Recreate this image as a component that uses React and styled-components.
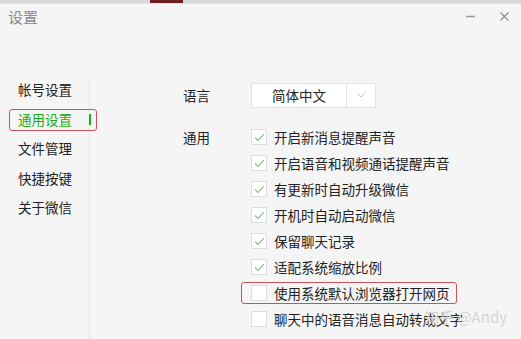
import styled, { createGlobalStyle } from 'styled-components';

const GlobalStyle = createGlobalStyle`
	html, body {
		margin: 0;
		padding: 0;
		background: #f5f5f5;
	}
	body {
		font-family: "Noto Sans CJK SC", "Noto Sans", sans-serif;
	}
`;

const Window = styled.div`
	width: 521px;
	height: 339px;
	background: #f5f5f5;
	overflow: hidden;
	position: relative;
	display: flex;
	flex-direction: column;
`;

const TopStrip = styled.div`
	height: 3px;
	background: #d9d9d9;
	display: flex;
	border-bottom: 1px solid #e4e4e4;
	&::before {
		content: '';
		width: 150px;
	}
	&::after {
		content: '';
		width: 33px;
		background: #6b1f22;
	}
`;

const Header = styled.div`
	height: 71px;
	display: flex;
	justify-content: space-between;
	align-items: flex-start;
	padding: 3px 12px 0 8px;
	box-sizing: border-box;
`;

const Title = styled.div`
	font-size: 15px;
	line-height: 20px;
	color: #8a8a8a;
`;

const Controls = styled.div`
	display: flex;
	align-items: center;
	gap: 25px;
	margin-top: 5px;
`;

const Body = styled.div`
	flex: 1;
	display: flex;
`;

const Sidebar = styled.div`
	width: 89px;
	border-right: 1px solid #e6e6e6;
	display: flex;
	flex-direction: column;
	margin-top: 5px;
	margin-bottom: -5px;
`;

const NavItem = styled.div`
	position: relative;
	height: 29.5px;
	line-height: 29.5px;
	padding-left: 18px;
	font-size: 13.5px;
	color: ${(p) => (p.$active ? '#1aad19' : '#222')};
	&:first-child {
		margin-top: -5px;
	}
`;

const ActiveBar = styled.span`
	position: absolute;
	right: -2px;
	top: 9px;
	width: 2px;
	height: 11px;
	background: #1aad19;
`;

const Annotation = styled.span`
	position: absolute;
	left: ${(p) => p.$left}px;
	top: ${(p) => p.$top}px;
	width: ${(p) => p.$width}px;
	height: ${(p) => p.$height}px;
	border: 1.5px solid #c8535a;
	border-radius: 3px;
	box-sizing: border-box;
	pointer-events: none;
`;

const Content = styled.div`
	flex: 1;
	padding: 8px 0 0 93px;
	display: grid;
	grid-template-columns: 68px 1fr;
	grid-auto-rows: min-content;
	row-gap: 16px;
`;

const Label = styled.div`
	font-size: 13.5px;
	color: #222;
	line-height: ${(p) => p.$lh}px;
`;

const Select = styled.div`
	display: flex;
	width: 125px;
	height: 25px;
	box-sizing: border-box;
	background: #fff;
	border: 1px solid #e3e3e3;
`;

const SelectValue = styled.div`
	flex: 1;
	text-align: center;
	font-size: 13.5px;
	line-height: 23px;
	color: #222;
	border-right: 1px solid #e3e3e3;
`;

const SelectArrow = styled.div`
	width: 28px;
	display: flex;
	align-items: center;
	justify-content: center;
`;

const Options = styled.div`
	display: flex;
	flex-direction: column;
`;

const OptionRow = styled.div`
	position: relative;
	height: 26px;
	display: flex;
	align-items: center;
	gap: 7px;
	font-size: 13.5px;
	color: #222;
	white-space: nowrap;
`;

const Box = styled.span`
	width: 16px;
	height: 16px;
	box-sizing: border-box;
	background: #fff;
	border: 1px solid #dedede;
	display: flex;
	align-items: center;
	justify-content: center;
`;

const Watermark = styled.div`
	position: absolute;
	right: 14px;
	bottom: 12px;
	font-size: 15px;
	color: rgba(205, 205, 205, 0.9);
	font-family: "Noto Sans CJK SC", "Liberation Sans", sans-serif;
	text-shadow: 0 0 1px rgba(255, 255, 255, 0.8);
`;

const Check = () => (
	<svg width="11" height="9" viewBox="0 0 11 9">
		<path d="M1 4.5 L4 7.5 L10 1.2" fill="none" stroke="#86c486" strokeWidth="1.2" />
	</svg>
);

const navItems = ['帐号设置', '通用设置', '文件管理', '快捷按键', '关于微信'];

const options = [
	{ text: '开启新消息提醒声音', checked: true },
	{ text: '开启语音和视频通话提醒声音', checked: true },
	{ text: '有更新时自动升级微信', checked: true },
	{ text: '开机时自动启动微信', checked: true },
	{ text: '保留聊天记录', checked: true },
	{ text: '适配系统缩放比例', checked: true },
	{ text: '使用系统默认浏览器打开网页', checked: false, marked: true },
	{ text: '聊天中的语音消息自动转成文字', checked: false },
];

const App = () => {
	return (
		<Window>
			<GlobalStyle />
			<TopStrip />
			<Header>
				<Title>设置</Title>
				<Controls>
					<svg width="9" height="3" viewBox="0 0 9 3">
						<path d="M0 1.5 H9" stroke="#9a9a9a" strokeWidth="1.5" />
					</svg>
					<svg width="9" height="9" viewBox="0 0 9 9">
						<path d="M0.5 0.5 L8.5 8.5 M8.5 0.5 L0.5 8.5" stroke="#8c8c8c" strokeWidth="1.1" />
					</svg>
				</Controls>
			</Header>
			<Body>
				<Sidebar>
					{navItems.map((item, i) => (
						<NavItem key={item} $active={i === 1}>
							{item}
							{i === 1 && (
								<>
									<ActiveBar />
									<Annotation $left={9} $top={4} $width={88} $height={22} />
								</>
							)}
						</NavItem>
					))}
				</Sidebar>
				<Content>
					<Label $lh={25}>语言</Label>
					<Select>
						<SelectValue>简体中文</SelectValue>
						<SelectArrow>
							<svg width="8" height="5" viewBox="0 0 8 5">
								<path d="M0.5 0.5 L4 4 L7.5 0.5" fill="none" stroke="#c4c4c4" strokeWidth="1" />
							</svg>
						</SelectArrow>
					</Select>
					<Label $lh={26}>通用</Label>
					<Options>
						{options.map((o) => (
							<OptionRow key={o.text}>
								<Box>{o.checked && <Check />}</Box>
								{o.text}
								{o.marked && <Annotation $left={-10} $top={2} $width={216} $height={22} />}
							</OptionRow>
						))}
					</Options>
				</Content>
			</Body>
			<Watermark>知乎 @Andy</Watermark>
		</Window>
	);
};

export default App;
